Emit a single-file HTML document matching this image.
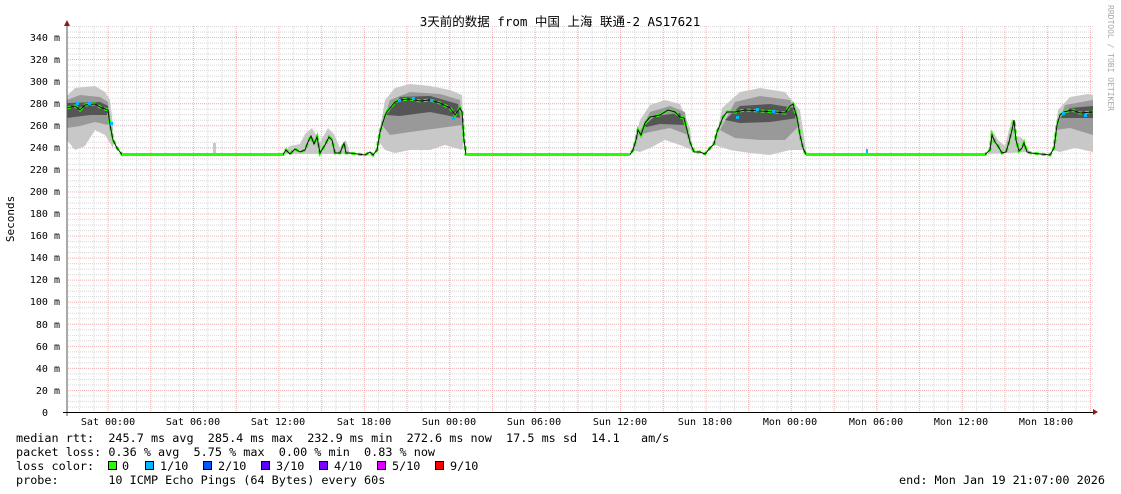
<!DOCTYPE html>
<html><head><meta charset="utf-8"><style>
html,body{margin:0;padding:0;background:#fff;}
svg{display:block;}
text{font-family:"DejaVu Sans Mono","Liberation Mono","Noto Sans CJK SC",monospace;fill:#000;white-space:pre;}
</style></head><body>
<svg width="1121" height="494" viewBox="0 0 1121 494" xmlns="http://www.w3.org/2000/svg">
<defs>
<pattern id="vg" patternUnits="userSpaceOnUse" x="107.6" y="0" width="14.236" height="494">
<line x1="0.5" y1="0" x2="0.5" y2="494" stroke="#d8d8d8" stroke-dasharray="1,1"/></pattern>
<pattern id="vr" patternUnits="userSpaceOnUse" x="107.6" y="0" width="42.708" height="494">
<line x1="0.5" y1="0" x2="0.5" y2="494" stroke="#f2b4b4" stroke-dasharray="1,1"/></pattern>
<pattern id="hg" patternUnits="userSpaceOnUse" x="0" y="412" width="1121" height="5.5147">
<line x1="0" y1="0.5" x2="1121" y2="0.5" stroke="#d8d8d8" stroke-dasharray="1,1"/></pattern>
<pattern id="hr" patternUnits="userSpaceOnUse" x="0" y="412" width="1121" height="22.059">
<line x1="0" y1="0.5" x2="1121" y2="0.5" stroke="#f2b4b4" stroke-dasharray="1,1"/></pattern>
<clipPath id="pa"><rect x="67" y="26" width="1026" height="386"/></clipPath>
</defs>
<g clip-path="url(#pa)">
<rect x="67" y="26" width="1026" height="386" fill="url(#hg)"/>
<rect x="67" y="26" width="1026" height="386" fill="url(#vg)"/>
<rect x="67" y="26" width="1026" height="386" fill="url(#hr)"/>
<rect x="67" y="26" width="1026" height="386" fill="url(#vr)"/>
<g fill="#c8c8c8">
<polygon points="67,96 75,88 95,86 105,92 110,100 113,125 113,148 105,135 95,130 85,146 75,150 67,140"/>
<polygon points="378,140 385,100 395,88 410,84 430,86 450,90 462,95 464,140 462,150 445,145 430,150 410,150 395,153 385,150"/>
<polygon points="632,150 640,120 650,105 665,100 680,104 690,128 692,150 680,145 665,140 650,148 640,152"/>
<polygon points="715,145 722,108 740,92 760,88 785,92 800,110 806,150 790,150 770,155 750,153 730,150"/>
<polygon points="1053,150 1058,110 1070,97 1088,94 1093,95 1093,152 1075,148 1060,152"/>
<polygon points="283,154 290,146 300,144 305,134 312,128 320,142 328,128 334,134 340,148 346,140 350,154"/>
<polygon points="988,154 992,130 998,140 1005,146 1012,118 1016,136 1022,138 1030,152"/>
<rect x="213" y="143" width="3" height="11"/>
</g>
<g fill="#999">
<polygon points="67,100 80,95 100,97 108,102 110,118 108,125 95,122 80,126 67,128"/>
<polygon points="382,125 390,100 410,92 440,94 460,100 462,125 440,128 410,132 390,135"/>
<polygon points="638,135 650,112 670,106 685,112 688,135 670,128 650,132"/>
<polygon points="720,130 735,102 760,96 790,100 800,125 785,140 760,140 735,138"/>
<polygon points="1056,130 1065,105 1093,100 1093,135 1070,128"/>
</g>
<g fill="#555">
<polygon points="67,103 100,102 108,106 108,115 90,115 67,118"/>
<polygon points="386,115 400,97 430,96 458,104 460,118 430,112 400,116"/>
<polygon points="642,128 655,116 680,113 685,125 660,124"/>
<polygon points="725,120 740,106 770,104 795,108 798,118 770,122 740,123"/>
<polygon points="1060,118 1070,108 1093,106 1093,118 1070,118"/>
</g>
<polyline fill="none" stroke="#26ff00" stroke-width="3" stroke-dasharray="4,3" points="67,108 75,106 80,110 85,105 95,104 100,107 108,110 110,125 113,140 117,148 122,154.5 283,154.5 286,150 290,154 295,149 300,152 305,150 308,142 311,136 314,144 317,137 320,153 325,145 329,137 332,140 335,153 340,153 344,143 346,153 350,153 365,155 370,152 373,155 377,150 380,132 383,122 386,113 390,108 395,102 400,100 410,99 420,101 430,100 440,103 450,108 455,115 460,108 462,112 464,140 466,154.5 630,154.5 633,150 636,140 638,130 641,135 645,123 650,117 660,115 668,110 675,112 680,117 684,118 687,130 690,142 694,152 700,152 705,154 710,148 714,144 717,132 720,125 723,117 727,112 735,112 745,110 760,111 775,112 785,113 790,106 793,104 797,118 800,135 803,148 806,154.5 985,154.5 990,150 992,135 995,142 998,146 1002,153 1006,152 1009,142 1012,130 1014,120 1016,140 1019,151 1022,148 1024,143 1027,152 1031,153 1050,155 1054,148 1057,125 1060,115 1064,112 1072,110 1080,113 1093,112"/>
<polyline fill="none" stroke="#111" stroke-width="1" points="67,108 75,106 80,110 85,105 95,104 100,107 108,110 110,125 113,140 117,148 122,154.5 283,154.5 286,150 290,154 295,149 300,152 305,150 308,142 311,136 314,144 317,137 320,153 325,145 329,137 332,140 335,153 340,153 344,143 346,153 350,153 365,155 370,152 373,155 377,150 380,132 383,122 386,113 390,108 395,102 400,100 410,99 420,101 430,100 440,103 450,108 455,115 460,108 462,112 464,140 466,154.5 630,154.5 633,150 636,140 638,130 641,135 645,123 650,117 660,115 668,110 675,112 680,117 684,118 687,130 690,142 694,152 700,152 705,154 710,148 714,144 717,132 720,125 723,117 727,112 735,112 745,110 760,111 775,112 785,113 790,106 793,104 797,118 800,135 803,148 806,154.5 985,154.5 990,150 992,135 995,142 998,146 1002,153 1006,152 1009,142 1012,130 1014,120 1016,140 1019,151 1022,148 1024,143 1027,152 1031,153 1050,155 1054,148 1057,125 1060,115 1064,112 1072,110 1080,113 1093,112"/>
<rect x="122" y="153" width="161" height="3" fill="#26ff00"/>
<rect x="466" y="153" width="164" height="3" fill="#26ff00"/>
<rect x="806" y="153" width="179" height="3" fill="#26ff00"/>
<g fill="#00b8ff">
<rect x="76" y="102" width="3" height="3"/><rect x="88" y="102" width="3" height="3"/><rect x="110" y="122" width="3" height="3"/>
<rect x="398" y="99" width="3" height="3"/><rect x="412" y="97" width="3" height="3"/><rect x="430" y="99" width="3" height="3"/><rect x="452" y="117" width="3" height="3"/>
<rect x="736" y="116" width="3" height="3"/><rect x="756" y="108" width="3" height="3"/><rect x="772" y="110" width="3" height="3"/>
<rect x="1062" y="112" width="3" height="3"/><rect x="1084" y="114" width="3" height="3"/><rect x="866" y="149" width="2" height="4"/>
</g>
</g>
<line x1="67" y1="24" x2="67" y2="416" stroke="#555"/>
<line x1="63" y1="412.5" x2="1095" y2="412.5" stroke="#000"/>
<polygon points="64,26 70,26 67,20" fill="#8b1a1a"/>
<polygon points="1093,409 1093,415 1098,412" fill="#8b1a1a"/>
<g font-size="10" text-anchor="end">
<text x="60" y="41">340 m</text><text x="60" y="63">320 m</text><text x="60" y="85">300 m</text><text x="60" y="107">280 m</text><text x="60" y="129">260 m</text><text x="60" y="151">240 m</text><text x="60" y="173">220 m</text><text x="60" y="195">200 m</text><text x="60" y="217">180 m</text><text x="60" y="239">160 m</text><text x="60" y="261">140 m</text><text x="60" y="283">120 m</text><text x="60" y="305">100 m</text><text x="60" y="328">80 m</text><text x="60" y="350">60 m</text><text x="60" y="372">40 m</text><text x="60" y="394">20 m</text><text x="48" y="416">0</text>
</g>
<g font-size="10" text-anchor="middle">
<text x="108" y="425">Sat 00:00</text><text x="193" y="425">Sat 06:00</text><text x="278" y="425">Sat 12:00</text><text x="364" y="425">Sat 18:00</text><text x="449" y="425">Sun 00:00</text><text x="534" y="425">Sun 06:00</text><text x="620" y="425">Sun 12:00</text><text x="705" y="425">Sun 18:00</text><text x="790" y="425">Mon 00:00</text><text x="876" y="425">Mon 06:00</text><text x="961" y="425">Mon 12:00</text><text x="1046" y="425">Mon 18:00</text>
</g>
<text x="560" y="26" font-size="12.5" text-anchor="middle">3天前的数据 from 中国 上海 联通-2 AS17621</text>
<text transform="translate(14,219) rotate(-90)" font-size="11" text-anchor="middle">Seconds</text>
<text transform="translate(1108,5) rotate(90)" font-size="8" style="fill:#aaa">RRDTOOL / TOBI OETIKER</text>
<g font-size="11.8">
<text x="16" y="442">median rtt:  245.7 ms avg  285.4 ms max  232.9 ms min  272.6 ms now  17.5 ms sd  14.1   am/s</text>
<text x="16" y="456">packet loss: 0.36 % avg  5.75 % max  0.00 % min  0.83 % now</text>
<text x="16" y="470">loss color:</text>
<text x="16" y="484">probe:       10 ICMP Echo Pings (64 Bytes) every 60s</text>
<text x="1105" y="484" text-anchor="end">end: Mon Jan 19 21:07:00 2026</text>
<text x="122" y="470">0</text><text x="160" y="470">1/10</text><text x="218" y="470">2/10</text><text x="276" y="470">3/10</text><text x="334" y="470">4/10</text><text x="392" y="470">5/10</text><text x="450" y="470">9/10</text>
</g>
<g stroke="#000" stroke-width="1">
<rect x="108.5" y="461.5" width="8" height="8" fill="#26ff00"/>
<rect x="145.5" y="461.5" width="8" height="8" fill="#00b8ff"/>
<rect x="203.5" y="461.5" width="8" height="8" fill="#0059ff"/>
<rect x="261.5" y="461.5" width="8" height="8" fill="#5e00ff"/>
<rect x="319.5" y="461.5" width="8" height="8" fill="#7e00ff"/>
<rect x="377.5" y="461.5" width="8" height="8" fill="#dd00ff"/>
<rect x="435.5" y="461.5" width="8" height="8" fill="#ff0000"/>
</g>
</svg>
</body></html>
